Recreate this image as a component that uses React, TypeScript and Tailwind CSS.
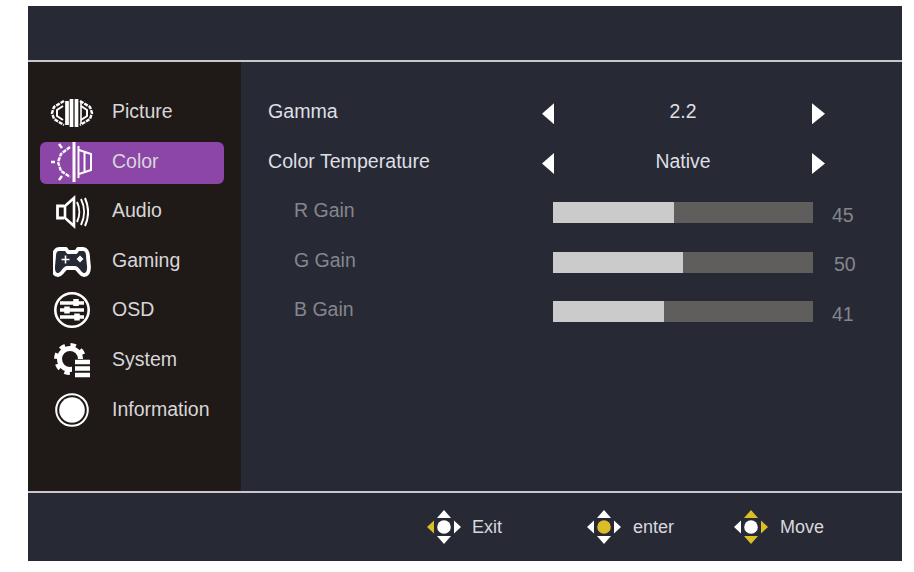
const font = "font-['Liberation_Sans',Arial,sans-serif]";

function PictureIcon() {
  return (
    <svg className="mt-0.5" width="44" height="30" viewBox="0 0 44 30" fill="none" stroke="#fff">
      <path d="M14 3 4 9 2 15l2 6 10 6M30 3l10 6 2 6-2 6-10 6" strokeWidth="2.400" strokeDasharray="4 1" />
      <path d="M13 8 7 12v6l6 4M31 8l6 4v6l-6 4" strokeWidth="2" />
      <path d="M17 3v24M21.500 1v28M26.500 1v28" strokeWidth="3.700" />
      <path d="M31 4v22" strokeWidth="1.600" />
    </svg>
  );
}

function ColorIcon() {
  return (
    <svg className="mt-0.5" width="44" height="40" viewBox="0 0 44 40" fill="none" stroke="#fff">
      <path d="M20 5 11 12 8 20l3 9 9 6" strokeWidth="2.400" strokeDasharray="4 1" />
      <path d="M1 20h4M9 2l3 4M9 38l3-4" strokeWidth="2.400" />
      <path d="M24 0v40" strokeWidth="3" />
      <path d="M28.500 4v32" strokeWidth="2" />
      <path d="M29 8l12 4v16l-12 4M34.500 11v18M41 12v16" strokeWidth="2" />
    </svg>
  );
}

function AudioIcon() {
  return (
    <svg className="mt-0.5" width="34" height="34" viewBox="0 0 34 34" fill="none" stroke="#fff">
      <path d="M9 11H2.500v12H9" strokeWidth="2.800" />
      <path d="M10 11l9-8v28l-9-8Z" strokeWidth="2.600" />
      <path d="M22 7c3 6 3 14 0 20M26 4c4 8 4 18 0 26M30 3c4 9 4 19 0 28" strokeWidth="2" />
    </svg>
  );
}

function GamingIcon() {
  return (
    <svg className="mt-0.5" width="38" height="32" viewBox="0 0 38 32" fill="none">
      <path d="M8 3h5l2 3h8l2-3h5c3 0 5 3 5 8l1 10c0 6-2 8-5 8-4 0-6-7-9-7h-8c-3 0-5 7-9 7-3 0-5-2-5-8l1-10c0-5 2-8 5-8Z" fill="#262a35" stroke="#fff" strokeWidth="3.800" strokeLinejoin="round" />
      <path d="M8.500 13.500h8M12.500 9.500v8" stroke="#fff" strokeWidth="1.600" />
      <path d="M27 9.500l3.500 3.500-3.500 3.500-3.500-3.500Z" fill="#fff" />
    </svg>
  );
}

function OsdIcon() {
  return (
    <svg width="38" height="38" viewBox="0 0 38 38" fill="none" stroke="#fff">
      <circle cx="19" cy="19" r="16.700" strokeWidth="2.600" />
      <path d="M7 12h24M7 19h24M7 26h24" strokeWidth="3.600" />
      <path d="M23 8v7M14 15.500v7M24 22.500v7" strokeWidth="5.500" />
    </svg>
  );
}

function SystemIcon() {
  return (
    <svg className="mt-0.5" width="38" height="38" viewBox="0 0 38 38" fill="none">
      <circle cx="17" cy="17" r="10.500" stroke="#fff" strokeWidth="5" />
      <circle cx="17" cy="17" r="14" stroke="#fff" strokeWidth="4" strokeDasharray="5.500 5.500" />
      <rect x="19" y="17" width="19" height="20" fill="#1f1a17" />
      <path d="M22 20h15M22 26.500h15M22 33h15" stroke="#fff" strokeWidth="4.600" />
    </svg>
  );
}

function InfoIcon() {
  return (
    <svg className="mt-0.5" width="34" height="34" viewBox="0 0 34 34">
      <circle cx="17" cy="17" r="15.800" fill="none" stroke="#fff" strokeWidth="2" />
      <circle cx="17" cy="17" r="12.800" fill="#fff" />
    </svg>
  );
}

function Dpad({ left, up, right, down, center }: { left?: boolean; up?: boolean; right?: boolean; down?: boolean; center?: boolean }) {
  const on = "#dcbd25";
  return (
    <svg width="36" height="36" viewBox="0 0 36 36">
      <path d="M18 1l7 8H11Z" fill={up ? on : "#fff"} />
      <path d="M18 35l-7-8h14Z" fill={down ? on : "#fff"} />
      <path d="M1 18l7-6.500v13Z" fill={left ? on : "#fff"} />
      <path d="M35 18l-7-6.500v13Z" fill={right ? on : "#fff"} />
      <circle cx="18" cy="18" r="6.800" fill={center ? on : "#fff"} />
    </svg>
  );
}

function TriLeft() {
  return <div className="mt-1 h-[21px] w-3 bg-white [clip-path:polygon(100%_0,100%_100%,0_50%)]" />;
}

function TriRight() {
  return <div className="mt-1 h-[21px] w-[13px] bg-white [clip-path:polygon(0_0,100%_50%,0_100%)]" />;
}

const menu = [
  { name: "Picture", icon: <PictureIcon /> },
  { name: "Color", icon: <ColorIcon />, active: true },
  { name: "Audio", icon: <AudioIcon /> },
  { name: "Gaming", icon: <GamingIcon /> },
  { name: "OSD", icon: <OsdIcon /> },
  { name: "System", icon: <SystemIcon /> },
  { name: "Information", icon: <InfoIcon /> },
];

const gains = [
  { name: "R Gain", value: 45, pct: 46.5, cls: "mt-[10px]" },
  { name: "G Gain", value: 50, pct: 50, cls: "ml-0.5 mt-2" },
  { name: "B Gain", value: 41, pct: 42.7, cls: "mt-[10px]" },
];

function Picker({ label, value }: { label: string; value: string }) {
  return (
    <div className="flex h-[49.6px] items-center text-[19.6px]">
      <div className="w-[274px] text-[#dfdfe4]">{label}</div>
      <TriLeft />
      <div className="w-[258px] text-center text-[19.4px] text-[#dfdfe4]">{value}</div>
      <TriRight />
    </div>
  );
}

export default function App() {
  return (
    <div className={`${font} h-[572px] w-[914px] bg-white pl-7 pt-1.5 text-[19.5px] leading-none`}>
      <div className="flex h-[555px] w-[874px] flex-col bg-[#272a34]">
        <div className="h-[54px]" />
        <div className="h-0.5 bg-[#c8c8cc]" />
        <div className="flex h-[429px]">
          <div className="w-[213px] bg-[#1f1a17] pt-[25px]">
            {menu.map((m) => (
              <div key={m.name} className="relative flex h-[49.6px] items-center pl-[84px] text-[#d8d6d8]">
                {m.active && <div className="absolute left-3 top-[5.4px] h-[42px] w-[184px] rounded-md bg-[#8c46a8]" />}
                <div className="absolute left-[22px] top-0 flex h-full w-[44px] items-center justify-center">{m.icon}</div>
                <span className="relative">{m.name}</span>
              </div>
            ))}
          </div>
          <div className="flex-1 pl-[27px] pt-[25px]">
            <Picker label="Gamma" value="2.2" />
            <Picker label="Color Temperature" value="Native" />
            {gains.map((g) => (
              <div key={g.name} className="flex h-[49.6px] items-center text-[#85868d]">
                <div className="w-[285px] pl-[26px]">{g.name}</div>
                <div className="mt-[3px] h-[21px] w-[260px] bg-[#5f5e5c]">
                  <div className="h-full bg-[#cbcbcb]" style={{ width: `${g.pct}%` }} />
                </div>
                <div className={`pl-[19px] ${g.cls}`}>{g.value}</div>
              </div>
            ))}
          </div>
        </div>
        <div className="h-0.5 bg-[#c8c8cc]" />
        <div className="flex flex-1 items-center pl-[398px] text-[18px] text-[#d8d8de]">
          <Dpad left />
          <span className="ml-[10px] w-[114px]">Exit</span>
          <Dpad center />
          <span className="ml-[11px] w-[100px]">enter</span>
          <Dpad up right down />
          <span className="ml-[11px]">Move</span>
        </div>
      </div>
    </div>
  );
}
